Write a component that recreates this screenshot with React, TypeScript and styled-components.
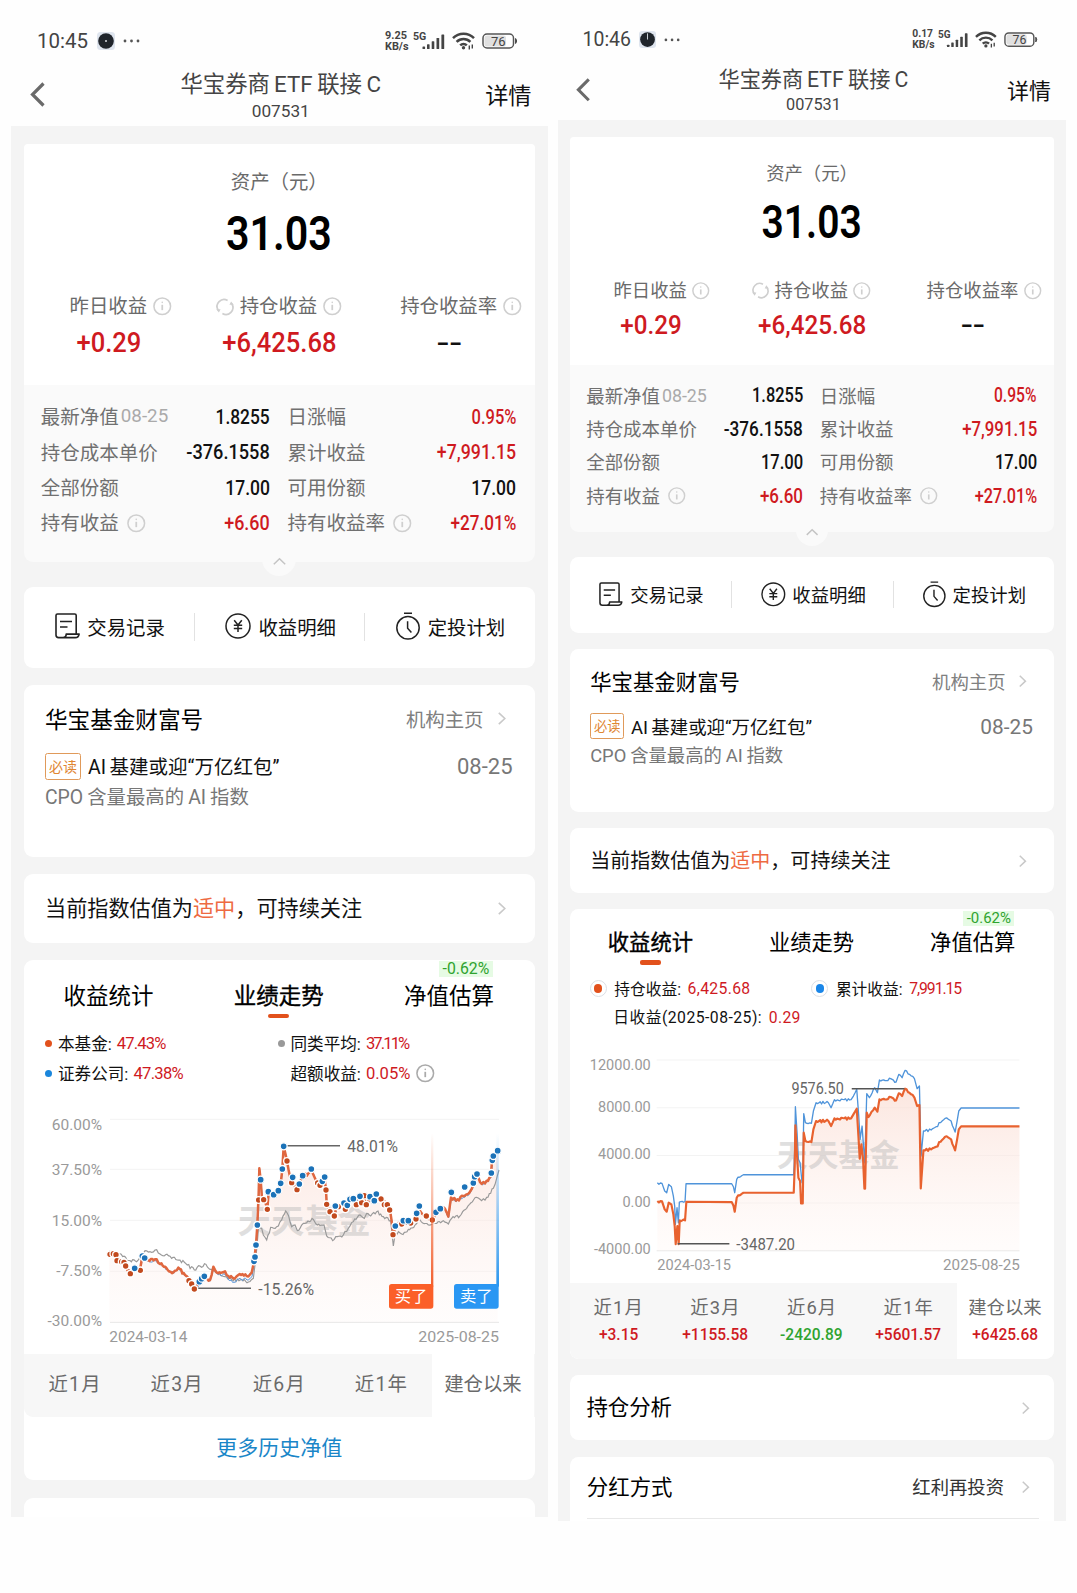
import React from "react";
import styled, { createGlobalStyle, css } from "styled-components";

/* Every length on a phone panel is a multiple of the panel's own unit. */
const u = (n: number) => `calc(${n} * var(--u))`;

const RED = "#cf1a1f";
const GREEN = "#2fa32f";
const ORANGE = "#e2511c";

const GlobalStyle = createGlobalStyle`
  * { box-sizing: border-box; }
  body {
    margin: 0;
    background: #fefefe;
    font-family: Roboto, "Noto Sans CJK SC", sans-serif;
    color: #111;
  }
`;

const Page = styled.main`
  display: flex;
  align-items: flex-start;
  gap: 10.5px;
  width: 1077px;
  height: 1593px;
  padding-left: 11px;
  overflow: hidden;
`;

const Phone = styled.section<{ $unit: number; $height: number; $top: number }>`
  --u: ${(p) => p.$unit}px;
  flex: none;
  display: flex;
  flex-direction: column;
  width: ${u(536.5)};
  height: ${(p) => p.$height}px;
  padding-top: ${(p) => p.$top}px;
  overflow: hidden;
  white-space: nowrap;
`;

const StatusBar = styled.div`
  flex: none;
  display: flex;
  align-items: center;
  height: ${u(62)};
  padding: ${u(20)} ${u(29.5)} 0 ${u(26)};
  color: #444;
`;

const Clock = styled.span`
  width: ${u(59.5)};
  font-size: ${u(20.5)};
`;

const Speed = styled.span`
  display: flex;
  flex-direction: column;
  width: ${u(27.5)};
  margin-left: auto;
  font-size: ${u(10.9)};
  font-weight: 700;
  line-height: ${u(11)};
`;

const Icon = styled.svg<{ $w: number; $h: number; $ml?: number }>`
  flex: none;
  display: block;
  width: ${(p) => u(p.$w)};
  height: ${(p) => u(p.$h)};
  margin-left: ${(p) => u(p.$ml ?? 0)};
  overflow: visible;
`;

const NavBar = styled.header`
  flex: none;
  display: grid;
  grid-template-columns: ${u(80)} 1fr ${u(80)};
  align-items: center;
  height: ${u(64)};
  padding: 0 ${u(16)} 0 ${u(19)};
  color: #444;
`;

const NavTitle = styled.div`
  padding-top: ${u(5)};
  text-align: center;
  font-size: ${u(22.4)};
  line-height: ${u(28)};
`;

const Latin = styled.span<{ $l?: number; $r?: number }>`
  margin: 0 ${(p) => u(p.$r ?? 0)} 0 ${(p) => u(p.$l ?? 0)};
`;

const FundCode = styled.div`
  font-size: ${u(17.2)};
  line-height: ${u(26)};
`;

const NavAction = styled.span`
  justify-self: end;
  padding-bottom: ${u(1)};
  font-size: ${u(23.2)};
  color: #111;
`;

const Body = styled.div`
  flex: 1;
  display: flex;
  flex-direction: column;
  padding: ${u(18)} ${u(13)} 0 ${u(13)};
  background: #f4f4f4;
`;

const Card = styled.div<{ $h: number; $mt?: number }>`
  flex: none;
  height: ${(p) => u(p.$h)};
  margin-top: ${(p) => u(p.$mt ?? 17)};
  background: #fff;
  border-radius: ${u(9)};
`;

const Summary = styled(Card)`
  padding-top: ${u(24)};
  border-radius: ${u(4)} ${u(4)} 0 0;
  text-align: center;
`;

const AssetLabel = styled.div`
  font-size: ${u(19.4)};
  line-height: ${u(30)};
  color: #6a6a6a;
`;

const Narrow = styled.span<{ $k: number; $origin?: string }>`
  display: inline-block;
  transform: scaleX(${(p) => p.$k});
  transform-origin: ${(p) => p.$origin ?? "center"};
`;

const Amount = styled.div`
  margin-top: ${u(6)};
  font-size: ${u(49)};
  font-weight: 600;
  line-height: ${u(60)};
  color: #000;
`;

const Metrics = styled.div`
  display: grid;
  grid-template-columns: repeat(3, 1fr);
  margin-top: ${u(29.5)};
`;

const MetricLabel = styled.div`
  display: flex;
  justify-content: center;
  align-items: center;
  padding-right: ${u(1.5)};
  font-size: ${u(19.4)};
  line-height: ${u(26)};
  color: #6a6a6a;
`;

const IconSlot = styled.span<{ $end?: boolean }>`
  display: flex;
  justify-content: ${(p) => (p.$end ? "flex-end" : "flex-start")};
  width: ${u(24)};
`;

const MetricValue = styled.div<{ $color: string }>`
  margin-top: ${u(6.4)};
  font-size: ${u(27.5)};
  font-weight: 500;
  line-height: ${u(34)};
  color: ${(p) => p.$color};
`;

const Details = styled.div`
  position: relative;
  flex: none;
  display: grid;
  grid-template-columns: 1fr 1fr;
  grid-auto-rows: ${u(35.3)};
  column-gap: ${u(17.5)};
  height: ${u(176.5)};
  padding: ${u(14.4)} ${u(18)} 0 ${u(16.8)};
  background: #fafafa;
  border-radius: 0 0 ${u(9)} ${u(9)};
`;

const DetailRow = styled.div`
  display: flex;
  align-items: center;
  padding-bottom: ${u(2.2)};
  font-size: ${u(19.5)};
  color: #707070;
`;

const DetailDate = styled.span`
  margin: ${u(1)} 0 0 ${u(2)};
  font-size: ${u(18.8)};
  color: #aaa;
`;

const DetailInfo = styled.span`
  margin: ${u(2)} 0 0 ${u(8)};
`;

const DetailValue = styled.span<{ $red?: boolean }>`
  margin: ${u(2.4)} 0 0 auto;
  font-size: ${u(20.4)};
  font-weight: 500;
  color: ${(p) => (p.$red ? RED : "#111")};
`;

const CollapseTab = styled.span`
  position: absolute;
  left: 50%;
  bottom: ${u(-14)};
  display: flex;
  justify-content: center;
  align-items: center;
  width: ${u(34)};
  height: ${u(34)};
  margin-left: ${u(-17)};
  padding-top: ${u(6)};
  border-radius: 50%;
  background: #fafafa;
`;

const Actions = styled(Card)`
  display: grid;
  grid-template-columns: repeat(3, 1fr);
  align-items: center;
  padding-bottom: ${u(1)};
`;

const Action = styled.div`
  display: flex;
  justify-content: center;
  align-items: center;
  gap: ${u(7.5)};
  height: ${u(28)};
  padding: 0 0 ${u(1.2)} ${u(1.5)};
  font-size: ${u(19.4)};
  color: #111;
  & + & { border-left: 1px solid #e2e2e2; }
`;

const News = styled(Card)`
  padding: ${u(17.6)} ${u(22)} 0 ${u(21)};
`;

const Row = styled.div<{ $h?: number; $mt?: number; $pr?: number }>`
  display: flex;
  align-items: center;
  height: ${(p) => u(p.$h ?? 32)};
  margin-top: ${(p) => u(p.$mt ?? 0)};
  padding-right: ${(p) => u(p.$pr ?? 0)};
`;

const Title = styled.span`
  padding-bottom: ${u(1)};
  font-size: ${u(22.6)};
  color: #000;
`;

const Side = styled.span<{ $color?: string }>`
  margin-left: auto;
  font-size: ${u(19.4)};
  color: ${(p) => p.$color ?? "#808080"};
`;

const Tag = styled.span`
  display: flex;
  justify-content: center;
  align-items: center;
  width: ${u(36)};
  height: ${u(27)};
  margin-right: ${u(7)};
  padding-bottom: ${u(1)};
  border: 1px solid #e09a5a;
  border-radius: ${u(2.5)};
  font-size: ${u(14)};
  color: #e08632;
`;

const Headline = styled.span`
  padding-bottom: ${u(1)};
  font-size: ${u(19.5)};
  color: #111;
`;

const NewsDate = styled.span`
  margin-left: auto;
  padding-top: ${u(1)};
  font-size: ${u(22)};
  color: #777;
`;

const NewsBrief = styled.div`
  margin-top: ${u(2)};
  font-size: ${u(19.4)};
  line-height: ${u(28)};
  color: #777;
`;

const LinkCard = styled(Card)<{ $pl?: number; $pr?: number }>`
  display: flex;
  align-items: center;
  padding: 0 ${(p) => u(p.$pr ?? 29)} 0 ${(p) => u(p.$pl ?? 21)};
  ${Title} { padding-bottom: ${u(4.5)}; }
`;

const Valuation = styled.span`
  padding-bottom: ${u(3)};
  font-size: ${u(21.15)};
  color: #111;
  em { font-style: normal; color: #ee6a42; }
`;

const Stats = styled(Card)`
  display: flex;
  flex-direction: column;
  overflow: hidden;
`;

const Tabs = styled.div`
  flex: none;
  display: grid;
  grid-template-columns: repeat(3, 1fr);
  height: ${u(68.5)};
`;

const Tab = styled.div<{ $on?: boolean }>`
  position: relative;
  display: flex;
  flex-direction: column;
  align-items: center;
  padding: ${u(20)} ${u(1)} 0 0;
  font-size: ${u(22.5)};
  line-height: ${u(32)};
  color: #000;
  ${(p) =>
    p.$on &&
    css`
      -webkit-text-stroke: 0.35px #000;
      &::after {
        content: "";
        width: ${u(21.5)};
        height: ${u(4.4)};
        margin-top: ${u(2)};
        border-radius: ${u(2.2)};
        background: ${ORANGE};
      }
    `}
`;

const TabBadge = styled.span`
  position: absolute;
  top: ${u(1.5)};
  left: 50%;
  width: ${u(54)};
  margin-left: ${u(-10.5)};
  text-align: center;
  font-size: ${u(15.8)};
  line-height: ${u(16)};
  background: #e6fbe4;
  color: ${GREEN};
`;

const Legend = styled.div<{ $first: number; $pl: number }>`
  flex: none;
  display: grid;
  grid-template-columns: ${(p) => u(p.$first)} 1fr;
  grid-auto-rows: ${u(30.2)};
  height: ${u(60.5)};
  padding-left: ${(p) => u(p.$pl)};
`;

const LegendItem = styled.div<{ $gap?: number }>`
  display: flex;
  align-items: center;
  gap: ${(p) => u(p.$gap ?? 6)};
  font-size: ${u(16.6)};
  color: #111;
`;

const LegendName = styled.span<{ $ls?: number }>`
  padding-bottom: ${u(1)};
  letter-spacing: ${(p) => u(p.$ls ?? 0)};
`;

const LegendValue = styled.span<{ $ls?: number }>`
  margin-left: ${u(-1)};
  letter-spacing: ${(p) => u(p.$ls ?? 0)};
  color: ${RED};
`;

const Dot = styled.i<{ $color: string }>`
  flex: none;
  width: ${u(7)};
  height: ${u(7)};
  border-radius: 50%;
  background: ${(p) => p.$color};
`;

const RingDot = styled.i<{ $color: string }>`
  flex: none;
  display: grid;
  place-items: center;
  width: ${u(18)};
  height: ${u(18)};
  border: 1px solid #dcdfe5;
  border-radius: 50%;
  &::after {
    content: "";
    width: ${u(8.8)};
    height: ${u(8.8)};
    border-radius: 50%;
    background: ${(p) => p.$color};
  }
`;

const RingGap = styled.i`
  flex: none;
  width: ${u(17)};
`;

const ChartBox = styled.svg`
  flex: none;
  display: block;
  width: 100%;
  height: ${u(265.5)};
  font-family: Roboto, "Noto Sans CJK SC", sans-serif;
`;

const Periods = styled.div<{ $h: number }>`
  flex: none;
  display: grid;
  grid-template-columns: repeat(5, 1fr);
  height: ${(p) => u(p.$h)};
  background: #f7f7f7;
  border-bottom-left-radius: ${u(9)};
`;

const Period = styled.div<{ $on?: boolean }>`
  display: flex;
  flex-direction: column;
  justify-content: center;
  align-items: center;
  padding-right: ${u(1)};
  font-size: ${u(19.4)};
  line-height: ${u(28)};
  color: #6a6a6a;
  background: ${(p) => (p.$on ? "#fff" : "transparent")};
`;

const PeriodDigit = styled.span`
  margin: 0 ${u(1.2)};
`;

const PeriodValue = styled.span<{ $down?: boolean }>`
  font-size: ${u(18)};
  font-weight: 500;
  color: ${(p) => (p.$down ? GREEN : RED)};
`;

const MoreLink = styled.a`
  flex: 1;
  display: flex;
  justify-content: center;
  align-items: center;
  padding-bottom: ${u(5)};
  font-size: ${u(21)};
  color: #1a86c8;
`;

const Dividend = styled(Card)`
  padding: ${u(13.5)} ${u(16)} 0 ${u(17.5)};
`;

const DividendRow = styled(Row)`
  height: ${u(52.5)};
  padding: 0 ${u(10)} ${u(17)} 0;
  border-bottom: 1px solid #e8e8e8;
  svg { margin-top: ${u(3)}; }
`;

/* ---------- icons ---------- */

const InfoIcon = ({ color = "#cfcfcf", ml }: { color?: string; ml?: number }) => (
  <Icon $w={18.5} $h={18.5} $ml={ml} viewBox="0 0 18 18" fill="none" stroke={color} strokeWidth="1.5">
    <circle cx="9" cy="9" r="8.1" />
    <path d="M9 7.6v5.2" strokeWidth="1.7" />
    <circle cx="9" cy="5.2" r=".8" fill={color} stroke="none" />
  </Icon>
);

const RefreshIcon = () => (
  <Icon $w={18} $h={18} viewBox="0 0 18 18" fill="none" stroke="#cfcfcf" strokeWidth="1.7">
    <path d="M2.2 12.200A7 7 0 0 1 11.600 2.400M15.800 5.800A7 7 0 0 1 6.400 15.600" />
    <path d="M.2 11.200h4.400l-1.700 3.300zM17.800 6.800h-4.400l1.700-3.300z" fill="#cfcfcf" stroke="none" />
  </Icon>
);

const Chevron = ({ ml = 0 }: { ml?: number }) => (
  <Icon $w={7.5} $h={13} $ml={ml} viewBox="0 0 7.5 13" fill="none" stroke="#c9c9c9" strokeWidth="1.6">
    <path d="M.8.8l6 5.7-6 5.7" />
  </Icon>
);

const RecordIcon = () => (
  <Icon $w={25} $h={26} viewBox="0 0 25 26" fill="none" stroke="#222" strokeWidth="1.6" strokeLinejoin="round">
    <path d="M21.2 20.800V2.5a1.5 1.5 0 0 0-1.500-1.500H2.500A1.500 1.500 0 0 0 1 2.500V22a2.600 2.600 0 0 0 2.600 2.600h16.600c2.200 0 3.600-1.300 3.900-3.500H11.200c0 2.200-1 3.500-3.200 3.500" />
    <path d="M5 8.500h12M5 14h7.500" />
  </Icon>
);

const YuanIcon = () => (
  <Icon $w={26} $h={26} viewBox="0 0 26 26" fill="none" stroke="#222" strokeWidth="1.5">
    <circle cx="13" cy="13" r="12" />
    <path d="M9.2 7.2l3.800 4.800 3.800-4.800M13 12v7M8.800 12.300h8.400M8.800 15.600h8.400" />
  </Icon>
);

const TimerIcon = () => (
  <Icon $w={24} $h={28} viewBox="0 0 24 28" fill="none" stroke="#222" strokeWidth="1.5">
    <circle cx="12" cy="15.8" r="11.2" />
    <path d="M8 1.200h8M11.600 9.200v7l3.800 4.400" />
  </Icon>
);

const AppIcon = ({ hand }: { hand?: boolean }) => (
  <Icon $w={18} $h={18} viewBox="0 0 18 18">
    <rect width="18" height="18" rx="3.5" fill="#dfe5ee" />
    <circle cx="9" cy="9" r="7.8" fill="#20252b" />
    {hand ? <path d="M9 2.500v6.500" stroke="#d8dde2" strokeWidth="1" /> : <circle cx="9" cy="9" r="1" fill="#d8dde2" />}
  </Icon>
);

const MoreDots = () => (
  <Icon $w={17} $h={4} $ml={8.5} viewBox="0 0 17 4" fill="#555">
    <circle cx="2" cy="2" r="1.4" />
    <circle cx="8.5" cy="2" r="1.4" />
    <circle cx="15" cy="2" r="1.4" />
  </Icon>
);

const Signal = () => (
  <Icon $w={32} $h={18} viewBox="0 0 32 18" fill="#444">
    <text x="0" y="7.6" fontSize="10.6" fontWeight="700" fontFamily="Roboto, sans-serif">5G</text>
    <rect x="9.5" y="14.5" width="2.6" height="2.5" rx=".6" />
    <rect x="14" y="12.2" width="2.6" height="4.8" rx=".6" />
    <rect x="18.7" y="9.2" width="2.6" height="7.8" rx=".6" />
    <rect x="23.5" y="6" width="2.7" height="11" rx=".6" />
    <rect x="28.4" y="2.5" width="2.8" height="14.5" rx=".6" />
  </Icon>
);

const Wifi = () => (
  <Icon $w={23} $h={18} $ml={7} viewBox="0 0 23 18" fill="none" stroke="#444" strokeWidth="2.5">
    <path d="M1 6.200a14.800 14.800 0 0 1 21 0M4.600 9.900a9.700 9.700 0 0 1 13.800 0M8.200 13.400a4.600 4.600 0 0 1 6.600 0" />
    <circle cx="11.5" cy="15.8" r="1.7" fill="#444" stroke="none" />
    <path d="M17.300 13.500v4M20.300 12.500v4" strokeWidth="1.400" />
  </Icon>
);

const Battery = () => (
  <Icon $w={36} $h={16} $ml={7.5} viewBox="0 0 36 16">
    <rect x="1" y="1" width="30.5" height="14" rx="4" fill="#fff" stroke="#555" strokeWidth="1.5" />
    <rect x="2.5" y="2.5" width="21.5" height="11" rx="2.6" fill="#e0e0e0" />
    <path d="M33.600 5.500q2 2.500 0 5z" fill="#444" stroke="#444" />
    <text x="16.3" y="12.6" fontSize="13" textAnchor="middle" fill="#444" fontFamily="Roboto, sans-serif">76</text>
  </Icon>
);

/* ---------- charts ---------- */

type Pt = [number, number];

/* Adds small market-like wobble between key points; long flat runs stay flat. */
const rough = (pts: Pt[], amp: number): Pt[] => {
  const out: Pt[] = [];
  pts.forEach(([x, y], i) => {
    out.push([x, y]);
    const next = pts[i + 1];
    if (!next) return;
    const dx = next[0] - x;
    if (dx < 9 || dx > 55) return;
    const n = Math.floor(dx / 4);
    for (let k = 1; k < n; k++) {
      const t = k / n;
      const px = x + dx * t;
      const noise = Math.sin(px * 12.9898) * 43758.5453;
      const r = noise - Math.floor(noise) - 0.5;
      out.push([px, y + (next[1] - y) * t + r * 2 * amp]);
    }
  });
  return out;
};

const line = (pts: Pt[]) => "M" + pts.map(([x, y]) => `${x.toFixed(1)} ${y.toFixed(1)}`).join("L");

const averageKeys: Pt[] = [[25,425],[50,428],[68,440],[90,452],[110,455],[125,440],[135,422],[150,425],[165,420],[180,432],[205,437],[215,445],[240,450],[262,465],[283,480],[300,468],[318,463],[330,478],[350,488],[375,500],[400,512],[425,508],[445,516],[460,505],[468,440],[476,350],[485,355],[490,375],[500,390],[512,352],[530,350],[545,330],[557,303],[566,318],[575,350],[585,345],[592,362],[605,345],[620,338],[636,325],[648,342],[672,345],[680,378],[698,392],[712,380],[730,375],[745,355],[760,335],[780,315],[793,325],[800,310],[812,318],[830,305],[850,320],[872,332],[880,408],[886,368],[905,372],[925,358],[945,345],[960,330],[985,345],[1010,340],[1030,332],[1045,342],[1055,325],[1080,318],[1100,295],[1130,262],[1145,272],[1160,262],[1180,235],[1190,205],[1197,180]];
const fundKeys: Pt[] = [[28,433],[45,430],[55,452],[72,458],[78,470],[92,490],[104,475],[120,480],[127,438],[140,450],[165,448],[180,462],[200,475],[220,487],[235,473],[255,495],[268,512],[283,537],[300,515],[313,498],[330,510],[340,470],[350,488],[375,484],[385,498],[405,505],[415,495],[440,498],[455,488],[462,455],[468,405],[472,345],[476,250],[478,175],[482,210],[486,265],[494,270],[502,298],[506,245],[520,255],[535,242],[542,220],[547,178],[551,109],[556,130],[561,153],[570,200],[577,215],[590,238],[600,215],[608,198],[625,190],[634,178],[645,205],[655,225],[665,215],[673,200],[678,240],[680,283],[690,305],[703,318],[710,290],[740,290],[750,268],[770,268],[790,258],[800,285],[812,262],[823,270],[830,252],[843,268],[860,285],[870,300],[876,340],[880,374],[886,348],[905,338],[925,335],[945,325],[958,300],[965,310],[980,320],[997,330],[1008,308],[1022,296],[1035,296],[1045,320],[1053,262],[1068,272],[1090,258],[1110,245],[1120,225],[1131,192],[1145,222],[1160,212],[1172,200],[1176,155],[1180,138],[1193,122]];
const buys: Pt[] = [[30,433],[40,431],[48,434],[51,452],[65,455],[72,457],[77,468],[91,491],[121,481],[267,512],[275,522],[283,537],[476,270],[491,269],[502,298],[561,153],[575,218],[591,239],[653,219],[660,226],[678,240],[680,283],[690,305],[703,318],[715,290],[736,298],[769,284],[785,278],[793,257],[799,284],[843,267],[853,284],[862,284],[869,300],[879,374],[905,342],[932,339],[948,327],[979,318],[997,330]];
const sells: Pt[] = [[104,475],[127,438],[134,444],[298,515],[305,506],[313,499],[462,454],[465,441],[468,405],[472,345],[482,209],[505,245],[521,254],[535,242],[542,220],[547,177],[551,109],[578,202],[598,222],[608,197],[634,177],[667,214],[674,201],[706,288],[732,279],[742,286],[750,268],[760,266],[780,259],[810,260],[823,272],[829,252],[886,348],[910,332],[925,332],[950,310],[958,288],[1008,307],[1021,296],[1054,247],[1094,231],[1120,219],[1124,200],[1131,192],[1174,189],[1177,151],[1180,138],[1193,122]];
const heldKeys: Pt[] = [[24,455],[38,456],[46,480],[52,487],[58,460],[66,465],[72,495],[76,530],[79,584],[84,530],[88,584],[91,513],[107,513],[111,457],[247,458],[252,468],[256,487],[262,445],[282,430],[433,430],[436,350],[438,228],[443,320],[447,385],[452,395],[455,462],[460,462],[463,250],[468,275],[486,278],[492,240],[500,215],[537,215],[545,230],[555,207],[605,207],[612,195],[622,178],[627,260],[631,328],[636,285],[641,330],[645,418],[647,418],[652,190],[657,203],[676,175],[684,187],[690,150],[728,145],[740,153],[748,132],[758,140],[767,118],[780,130],[795,145],[803,170],[810,167],[814,417],[822,303],[845,300],[860,292],[887,262],[905,270],[917,303],[928,240],[935,231],[1110,231]];
const totalKeys: Pt[] = [[24,400],[38,402],[46,425],[52,430],[58,405],[66,412],[72,440],[76,470],[78,525],[83,475],[87,520],[90,458],[107,457],[110,403],[247,403],[252,412],[256,430],[262,390],[282,376],[433,376],[436,300],[438,172],[443,250],[447,330],[452,340],[458,400],[460,400],[463,193],[468,220],[486,222],[492,185],[500,160],[537,160],[545,175],[555,151],[605,151],[612,140],[622,120],[628,200],[632,270],[638,230],[643,300],[646,340],[652,133],[660,145],[676,115],[684,130],[690,92],[728,90],[740,98],[748,75],[758,85],[767,63],[780,75],[795,88],[803,118],[810,110],[815,320],[822,245],[845,242],[860,232],[887,207],[905,215],[917,248],[928,185],[935,176],[1110,176]];

const Watermark = ({ x, y, w }: { x: number; y: number; w: number }) => (
  <text x={x} y={y} fontSize={w / 4} fontWeight="700" textLength={w} fill="#b5b5b5" opacity=".42">
    天天基金
  </text>
);

const Axis = ({ rows, x1, x2, lx, size }: { rows: [number, number, string][]; x1: number; x2: number; lx: number; size: number }) => (
  <>
    {rows.map(([gy, ty, label], i) => (
      <g key={label}>
        <path d={`M${x1} ${gy}H${x2}`} stroke={i === rows.length - 1 ? "#e6e6e6" : "#f3f3f3"} strokeWidth="3" />
        <text x={lx} y={ty + size * 0.335} fontSize={size} textAnchor="end" fill="#9a9a9a">{label}</text>
      </g>
    ))}
  </>
);

const PerformanceChart = () => {
  const fund = rough(fundKeys, 5);
  return (
    <ChartBox viewBox="-228 -63 1531.5 796.5">
      <defs>
        <linearGradient id="perfFill" x1="0" y1="0" x2="0" y2="1">
          <stop offset="0" stopColor="#fbe0d8" stopOpacity=".7" />
          <stop offset="1" stopColor="#fdf3f0" stopOpacity=".2" />
        </linearGradient>
        <linearGradient id="buyLine" gradientUnits="userSpaceOnUse" x1="0" y1="70" x2="0" y2="523">
          <stop offset="0" stopColor="#f26a3a" stopOpacity="0" />
          <stop offset="1" stopColor="#f2602f" />
        </linearGradient>
        <linearGradient id="sellLine" gradientUnits="userSpaceOnUse" x1="0" y1="70" x2="0" y2="523">
          <stop offset="0" stopColor="#4aa3ee" stopOpacity="0" />
          <stop offset="1" stopColor="#2a96ee" />
        </linearGradient>
      </defs>
      <Axis x1={30} x2={1197} lx={6} size={46.5} rows={[[28,45,"60.00%"],[178,178,"37.50%"],[331,331,"15.00%"],[484,481,"-7.50%"],[637,633,"-30.00%"]]} />
      <text x="28" y="697" fontSize="45.5" textLength="234" lengthAdjust="spacingAndGlyphs" fill="#9a9a9a">2024-03-14</text>
      <text x="955" y="697" fontSize="45.5" textLength="242" lengthAdjust="spacingAndGlyphs" fill="#9a9a9a">2025-08-25</text>
      <path d={`${line(fund)}V637H28Z`} fill="url(#perfFill)" />
      <Watermark x={413} y={370} w={399} />
      <path d={line(rough(averageKeys, 5))} fill="none" stroke="#999" strokeWidth="3.5" />
      <path d={line(rough(fundKeys.map(([x, y]): Pt => [x + 1, y + (x > 360 && x < 462 ? 12 : 3)]), 5))} fill="none" stroke="#5c97d8" strokeWidth="3" />
      <path d={line(fund)} fill="none" stroke="#e0673f" strokeWidth="7.5" strokeLinejoin="round" />
      <path d="M551 107H720M283 535H453" stroke="#666" strokeWidth="4.5" />
      <g stroke="#fff" strokeWidth="4">
        {buys.map(([x, y]) => <circle key={`b${x}`} cx={x} cy={y} r="10" fill="#c24a1e" />)}
        {sells.map(([x, y]) => <circle key={`s${x}`} cx={x} cy={y} r="10.5" fill="#1b72b8" />)}
      </g>
      <text x="742" y="125" fontSize="49" textLength="152" lengthAdjust="spacingAndGlyphs" fill="#666">48.01%</text>
      <text x="475" y="555" fontSize="49" textLength="167" lengthAdjust="spacingAndGlyphs" fill="#666">-15.26%</text>
      <rect x="993" y="70" width="7" height="460" fill="url(#buyLine)" />
      <rect x="1189" y="70" width="8" height="460" fill="url(#sellLine)" />
      <rect x="867" y="522" width="133" height="74" rx="8" fill="#fb5f28" />
      <rect x="1062" y="522" width="134" height="74" rx="8" fill="#2a97f3" />
      <text x="933" y="576" fontSize="49" textAnchor="middle" fill="#fff">买了</text>
      <text x="1129" y="576" fontSize="49" textAnchor="middle" fill="#fff">卖了</text>
    </ChartBox>
  );
};

const EarningsChart = () => {
  const held = rough(heldKeys, 4);
  return (
    <ChartBox viewBox="-238 -55 1450 754">
      <defs>
        <linearGradient id="earnFill" gradientUnits="userSpaceOnUse" x1="0" y1="118" x2="0" y2="604">
          <stop offset="0" stopColor="#fadcd2" stopOpacity=".7" />
          <stop offset="1" stopColor="#fff6f3" stopOpacity=".3" />
        </linearGradient>
      </defs>
      <Axis x1={22} x2={1110} lx={4} size={43.5} rows={[[32,47,"12000.00"],[175,172,"8000.00"],[318,315,"4000.00"],[461,457,"0.00"],[604,600,"-4000.00"]]} />
      <text x="24" y="662" fontSize="43.5" textLength="221" lengthAdjust="spacingAndGlyphs" fill="#9a9a9a">2024-03-15</text>
      <text x="881" y="662" fontSize="43.5" textLength="230" lengthAdjust="spacingAndGlyphs" fill="#9a9a9a">2025-08-25</text>
      <path d={`${line(held)}V604H24Z`} fill="url(#earnFill)" />
      <Watermark x={383} y={351} w={368} />
      <path d={line(rough(totalKeys, 4))} fill="none" stroke="#4f94da" strokeWidth="4" strokeLinejoin="round" />
      <path d={line(held)} fill="none" stroke="#e8622f" strokeWidth="6.5" strokeLinejoin="round" />
      <path d="M607 118H765M85 583H240" stroke="#555" strokeWidth="4.5" />
      <text x="426" y="135" fontSize="47" textLength="157" lengthAdjust="spacingAndGlyphs" fill="#666">9576.50</text>
      <text x="261" y="602" fontSize="47" textLength="176" lengthAdjust="spacingAndGlyphs" fill="#666">-3487.20</text>
    </ChartBox>
  );
};

/* ---------- shared sections ---------- */

const details: { label: string; date?: string; info?: boolean; value: string; red?: boolean; k: number }[] = [
  { label: "最新净值", date: "08-25", value: "1.8255", k: 0.85 },
  { label: "日涨幅", value: "0.95%", red: true, k: 0.81 },
  { label: "持仓成本单价", value: "-376.1558", k: 0.89 },
  { label: "累计收益", value: "+7,991.15", red: true, k: 0.87 },
  { label: "全部份额", value: "17.00", k: 0.86 },
  { label: "可用份额", value: "17.00", k: 0.86 },
  { label: "持有收益", info: true, value: "+6.60", red: true, k: 0.88 },
  { label: "持有收益率", info: true, value: "+27.01%", red: true, k: 0.84 },
];

const FundTop = ({ time, speed, hand }: { time: string; speed: string; hand?: boolean }) => (
  <>
    <StatusBar>
      <Clock>{time}</Clock>
      <AppIcon hand={hand} />
      <MoreDots />
      <Speed><span>{speed}</span><span>KB/s</span></Speed>
      <Signal />
      <Wifi />
      <Battery />
    </StatusBar>
    <NavBar>
      <Icon $w={15} $h={25} viewBox="0 0 15 25" fill="none" stroke="#6a6a6a" strokeWidth="3.2">
        <path d="M13.500 1.500l-11 11 11 11" />
      </Icon>
      <NavTitle>
        华宝券商<Latin $l={4} $r={4.5}>ETF</Latin>联接<Latin $l={4.5}>C</Latin>
        <FundCode>007531</FundCode>
      </NavTitle>
      <NavAction>详情</NavAction>
    </NavBar>
  </>
);

const FundOverview = () => (
  <>
    <Summary $h={241} $mt={0}>
      <AssetLabel>资产（元）</AssetLabel>
      <Amount><Narrow $k={0.84}>31.03</Narrow></Amount>
      <Metrics>
        <div>
          <MetricLabel><IconSlot />昨日收益<IconSlot $end><InfoIcon /></IconSlot></MetricLabel>
          <MetricValue $color={RED}><Narrow $k={0.93}>+0.29</Narrow></MetricValue>
        </div>
        <div>
          <MetricLabel><IconSlot><RefreshIcon /></IconSlot>持仓收益<IconSlot $end><InfoIcon /></IconSlot></MetricLabel>
          <MetricValue $color={RED}><Narrow $k={0.93}>+6,425.68</Narrow></MetricValue>
        </div>
        <div>
          <MetricLabel><IconSlot />持仓收益率<IconSlot $end><InfoIcon /></IconSlot></MetricLabel>
          <MetricValue $color="#111"><Narrow $k={1.38}>--</Narrow></MetricValue>
        </div>
      </Metrics>
    </Summary>
    <Details>
      {details.map((d) => (
        <DetailRow key={d.label}>
          {d.label}
          {d.date && <DetailDate>{d.date}</DetailDate>}
          {d.info && <DetailInfo><InfoIcon /></DetailInfo>}
          <DetailValue $red={d.red}><Narrow $k={d.k} $origin="right">{d.value}</Narrow></DetailValue>
        </DetailRow>
      ))}
      <CollapseTab>
        <Icon $w={13} $h={7} viewBox="0 0 13 7" fill="none" stroke="#c4c4c4" strokeWidth="1.5">
          <path d="M.8 6.200l5.700-5.400 5.700 5.400" />
        </Icon>
      </CollapseTab>
    </Details>
    <Actions $h={81} $mt={25.5}>
      <Action><RecordIcon />交易记录</Action>
      <Action><YuanIcon />收益明细</Action>
      <Action><TimerIcon />定投计划</Action>
    </Actions>
    <News $h={172}>
      <Row $pr={7.5}><Title>华宝基金财富号</Title><Side>机构主页</Side><Chevron ml={14} /></Row>
      <Row $mt={15.5}>
        <Tag>必读</Tag>
        <Headline><Latin $r={3.5}>AI</Latin>基建或迎“万亿红包”</Headline>
        <NewsDate>08-25</NewsDate>
      </Row>
      <NewsBrief><Latin $r={4}>CPO</Latin>含量最高的<Latin $l={4} $r={4}>AI</Latin>指数</NewsBrief>
    </News>
    <LinkCard $h={68.5}>
      <Valuation>当前指数估值为<em>适中</em>，可持续关注</Valuation>
      <Side><Chevron /></Side>
    </LinkCard>
  </>
);

const StatTabs = ({ active }: { active: number }) => (
  <Tabs>
    {["收益统计", "业绩走势", "净值估算"].map((name, i) => (
      <Tab key={name} $on={i === active}>
        {name}
        {i === 2 && <TabBadge>-0.62%</TabBadge>}
      </Tab>
    ))}
  </Tabs>
);

const periods: [string, string, string][] = [
  ["近", "1", "月"],
  ["近", "3", "月"],
  ["近", "6", "月"],
  ["近", "1", "年"],
  ["建仓以来", "", ""],
];
const gains = ["+3.15", "+1155.58", "-2420.89", "+5601.57", "+6425.68"];

const PeriodLabel = ({ parts: [before, digit, after] }: { parts: [string, string, string] }) => (
  <span>{before}{digit && <PeriodDigit>{digit}</PeriodDigit>}{after}</span>
);

export default function App() {
  return (
    <>
      <GlobalStyle />
      <Page>
        <Phone $unit={1} $height={1516.7} $top={0}>
          <FundTop time="10:45" speed="9.25" />
          <Body>
            <FundOverview />
            <Stats $h={520.7}>
              <StatTabs active={1} />
              <Legend $first={232.5} $pl={21}>
                <LegendItem><Dot $color={ORANGE} /><LegendName>本基金:</LegendName><LegendValue $ls={-0.85}>47.43%</LegendValue></LegendItem>
                <LegendItem><Dot $color="#999" /><LegendName>同类平均:</LegendName><LegendValue $ls={-1.9}>37.11%</LegendValue></LegendItem>
                <LegendItem><Dot $color="#1a86dc" /><LegendName>证券公司:</LegendName><LegendValue $ls={-0.7}>47.38%</LegendValue></LegendItem>
                <LegendItem><Dot $color="transparent" /><LegendName>超额收益:</LegendName><LegendValue>0.05%</LegendValue><InfoIcon color="#aaa" /></LegendItem>
              </Legend>
              <PerformanceChart />
              <Periods $h={62.7}>
                {periods.map((p, i) => (
                  <Period key={i} $on={i === 4}><PeriodLabel parts={p} /></Period>
                ))}
              </Periods>
              <MoreLink>更多历史净值</MoreLink>
            </Stats>
            <Card $h={60} $mt={17.5} />
          </Body>
        </Phone>

        <Phone $unit={0.947} $height={1520.7} $top={0.8}>
          <FundTop time="10:46" speed="0.17" hand />
          <Body>
            <FundOverview />
            <Stats $h={475.2}>
              <StatTabs active={0} />
              <Legend $first={234} $pl={20.5}>
                <LegendItem $gap={8}><RingDot $color={ORANGE} /><LegendName>持仓收益:</LegendName><LegendValue $ls={0.35}>6,425.68</LegendValue></LegendItem>
                <LegendItem $gap={8}><RingDot $color="#1a86e8" /><LegendName>累计收益:</LegendName><LegendValue $ls={-1.1}>7,991.15</LegendValue></LegendItem>
                <LegendItem $gap={8}><RingGap /><LegendName $ls={0.5}>日收益(2025-08-25):</LegendName><LegendValue $ls={0.35}>0.29</LegendValue></LegendItem>
              </Legend>
              <EarningsChart />
              <Periods $h={80.7}>
                {periods.map((p, i) => (
                  <Period key={i} $on={i === 4}>
                    <PeriodLabel parts={p} />
                    <PeriodValue $down={i === 2}><Narrow $k={0.91}>{gains[i]}</Narrow></PeriodValue>
                  </Period>
                ))}
              </Periods>
            </Stats>
            <LinkCard $h={68.7} $pl={17} $pr={26}>
              <Title>持仓分析</Title>
              <Side><Chevron /></Side>
            </LinkCard>
            <Dividend $h={80}>
              <DividendRow>
                <Title>分红方式</Title>
                <Side $color="#333">红利再投资</Side>
                <Chevron ml={19} />
              </DividendRow>
            </Dividend>
          </Body>
        </Phone>
      </Page>
    </>
  );
}
